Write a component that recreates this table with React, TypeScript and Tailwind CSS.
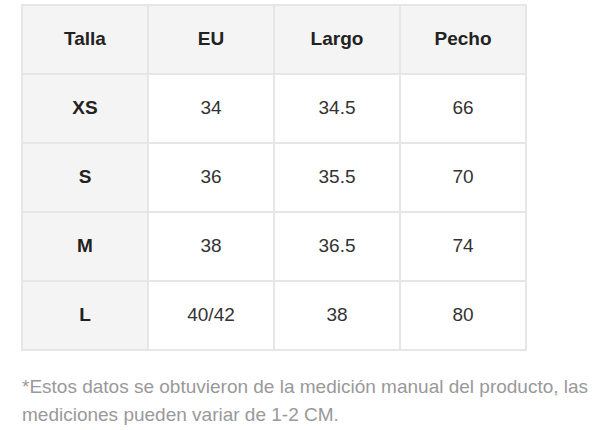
const headers = ["Talla", "EU", "Largo", "Pecho"];

const rows = [
  ["XS", "34", "34.5", "66"],
  ["S", "36", "35.5", "70"],
  ["M", "38", "36.5", "74"],
  ["L", "40/42", "38", "80"],
];

const App = () => {
  return (
    <div className="w-[600px] h-[430px] bg-white overflow-hidden font-['Liberation_Sans',Arial,sans-serif]">
      <div className="ml-[21px] mt-[4px] w-[506px] grid grid-cols-4 gap-[2px] p-[2px] bg-[#e6e6e6]">
        {headers.map((h) => (
          <div key={h} className="h-[67px] flex items-center justify-center bg-[#f4f4f4] text-[19px] font-bold text-[#222]">
            {h}
          </div>
        ))}
        {rows.map((r) =>
          r.map((cell, i) => (
            <div
              key={r[0] + i}
              className={
                i === 0
                  ? "h-[67px] flex items-center justify-center bg-[#f4f4f4] text-[19px] font-bold text-[#222]"
                  : "h-[67px] flex items-center justify-center bg-white text-[19px] text-[#333]"
              }
            >
              {cell}
            </div>
          ))
        )}
      </div>
      <p className="ml-[22px] mt-[22px] text-[19px] leading-[28px] text-[#999] whitespace-nowrap">
        *Estos datos se obtuvieron de la medición manual del producto, las
        <br />
        mediciones pueden variar de 1-2 CM.
      </p>
    </div>
  );
};

export default App;
